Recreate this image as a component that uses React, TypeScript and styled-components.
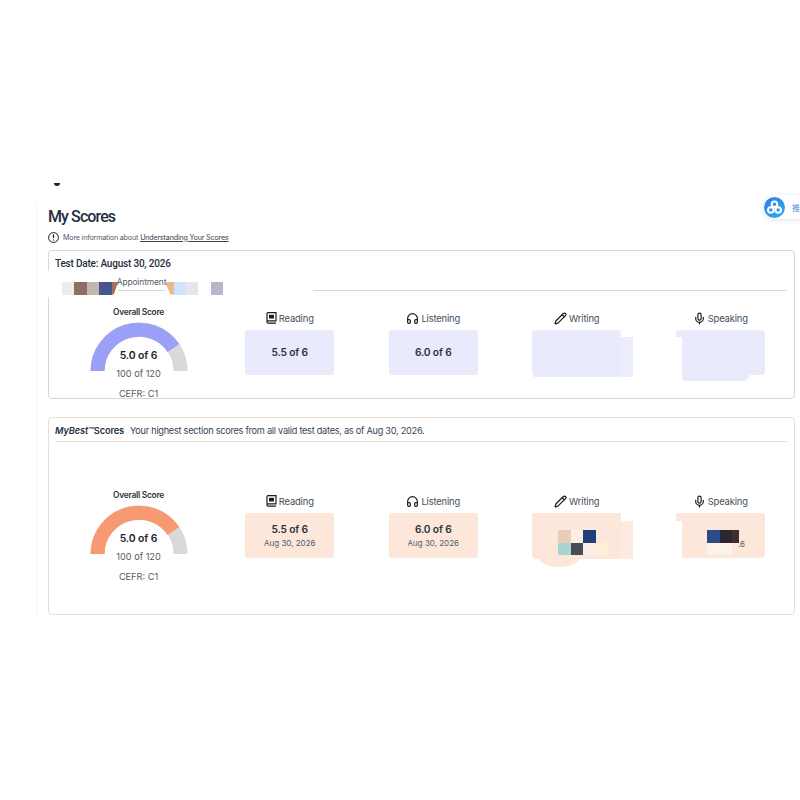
import styled, { createGlobalStyle } from "styled-components";
import { Headphones, Mic, Pencil } from "lucide-react";

const GlobalStyle = createGlobalStyle`
  * { box-sizing: border-box; }
  body {
    margin: 0;
    background: #fff;
    font-family: Inter, "Noto Sans", sans-serif;
    color: #2b3440;
  }
`;

const Page = styled.div`
  position: relative;
  width: 800px;
  height: 800px;
  overflow: hidden;
  padding-top: 183px;
`;
const TopMark = styled.div`
  width: 6px;
  height: 3px;
  margin-left: 54px;
  background: #222;
  border-radius: 0 0 4px 4px;
`;
const Panel = styled.div`
  margin: 16px 0 0 36px;
  padding: 0 5px 3px 11px;
  border-left: 1px solid #f4f4f4;
`;
const Title = styled.h1`
  margin: 0;
  padding-top: 3px;
  font-family: Roboto, sans-serif;
  font-size: 16px;
  line-height: 24px;
  font-weight: 500;
  letter-spacing: -0.9px;
  color: #1f2d3d;
`;
const Info = styled.div`
  display: flex;
  align-items: center;
  gap: 4px;
  height: 14px;
  margin: 1px 0 6px;
  font-size: 7.2px;
  letter-spacing: -0.2px;
  color: #555c66;
  svg { flex: none; }
  u { color: #3a424e; margin-left: 2px; }
`;
const Card = styled.section<{ $border: string; $height: number }>`
  position: relative;
  height: ${(p) => p.$height}px;
  margin-bottom: 18px;
  border: 1px solid ${(p) => p.$border};
  border-radius: 4px;
  &:last-child { margin-bottom: 0; }
`;
const TestDate = styled.h2`
  margin: 6px 0 0 6px;
  font-family: Roboto, sans-serif;
  font-size: 10px;
  line-height: 14px;
  font-weight: 500;
  letter-spacing: -0.2px;
  color: #27303c;
`;
const TabRow = styled.div`
  height: 20px;
  margin: 0 7px 0 6px;
  border-bottom: 1px solid #d6d7dc;
`;
const Tab = styled.div`
  position: relative;
  z-index: 2;
  width: 47px;
  height: 20px;
  margin-left: 63px;
  display: flex;
  justify-content: center;
  padding-top: 6px;
  white-space: nowrap;
  font-size: 8.4px;
  line-height: 11px;
  letter-spacing: -0.1px;
  color: #555c66;
  border-bottom: 1px solid #d6d7dc;
`;
const BestHeader = styled.div`
  display: flex;
  align-items: center;
  height: 23px;
  margin: 1px 7px 0 6px;
  padding-top: 1px;
  border-bottom: 1px solid #f1dccb;
  font-size: 9.2px;
  letter-spacing: -0.27px;
  color: #3c4450;
  b { font-weight: 600; color: #27303c; margin-right: 6px; letter-spacing: -0.1px; }
  i { font-weight: 600; }
`;
const ScoreGrid = styled.div<{ $top: number }>`
  display: grid;
  grid-template-columns: 159px repeat(4, 143.5px);
  margin-left: 10px;
  padding-top: ${(p) => p.$top}px;
`;
const OverallCol = styled.div`
  display: flex;
  flex-direction: column;
  align-items: center;
`;
const OverallLabel = styled.div`
  font-size: 8.4px;
  line-height: 12px;
  font-weight: 600;
  letter-spacing: -0.25px;
  color: #2b3440;
`;
const Gauge = styled.div`
  position: relative;
  width: 98px;
  height: 49px;
  margin-top: 4px;
  svg { display: block; }
`;
const GaugeValue = styled.div`
  position: absolute;
  left: 0;
  right: 0;
  top: 27px;
  text-align: center;
  font-size: 10.4px;
  line-height: 14px;
  font-weight: 600;
  letter-spacing: -0.1px;
  color: #1c2430;
`;
const Sub = styled.div`
  margin-top: -3px;
  font-size: 9.2px;
  line-height: 12px;
  color: #555c66;
`;
const Cefr = styled.div`
  margin-top: 8px;
  font-size: 9.2px;
  line-height: 12px;
  color: #555c66;
`;
const SectionCol = styled.div`
  display: flex;
  flex-direction: column;
  align-items: center;
  margin-top: 5px;
`;
const SectionLabel = styled.div`
  display: flex;
  align-items: center;
  gap: 2px;
  height: 14px;
  font-size: 9.4px;
  letter-spacing: -0.15px;
  color: #444c58;
  svg { color: #1c1c1c; flex: none; }
`;
const ScoreBox = styled.div<{ $bg: string }>`
  width: 89px;
  height: 45px;
  margin-top: 5px;
  display: flex;
  flex-direction: column;
  align-items: center;
  justify-content: center;
  border-radius: 3px;
  background: ${(p) => p.$bg};
`;
const BoxValue = styled.div`
  font-size: 10.2px;
  line-height: 15px;
  font-weight: 600;
  letter-spacing: -0.15px;
  color: #2b3440;
`;
const BoxDate = styled.div`
  font-size: 8px;
  line-height: 12px;
  color: #555c66;
`;
const Smear = styled.div<{ $x: number; $y: number; $w: number; $h: number; $c: string; $r?: string }>`
  position: absolute;
  left: ${(p) => p.$x}px;
  top: ${(p) => p.$y}px;
  width: ${(p) => p.$w}px;
  height: ${(p) => p.$h}px;
  background: ${(p) => p.$c};
  border-radius: ${(p) => p.$r ?? "0"};
`;
const Mosaic = styled.div<{ $x: number; $y: number }>`
  position: absolute;
  left: ${(p) => p.$x}px;
  top: ${(p) => p.$y}px;
  display: flex;
`;
const Tile = styled.div<{ $w: number; $c: string; $clip?: string }>`
  width: ${(p) => p.$w}px;
  height: 12.5px;
  background: ${(p) => p.$c};
  clip-path: ${(p) => p.$clip ?? "none"};
`;
const CutOff = styled.div`
  position: absolute;
  left: 689px;
  top: 120px;
  font-size: 8px;
  line-height: 12px;
  color: #555c66;
`;
const Widget = styled.div`
  position: absolute;
  top: 195px;
  left: 764px;
  width: 60px;
  height: 24px;
  display: flex;
  align-items: center;
  gap: 7px;
  background: #fff;
  border-radius: 12px 0 0 12px;
  box-shadow: 0 1px 6px rgba(120, 140, 170, 0.22);
  font-family: "Noto Sans CJK SC", sans-serif;
  font-size: 8px;
  color: #3f86d8;
  svg { flex: none; }
`;

type Section = { name: string; icon: React.ReactNode; value?: string; date?: string };

const BookIcon = () => (
  <svg width="11" height="12" viewBox="0 0 11 12" fill="none" stroke="#1c1c1c" strokeWidth="1.2">
    <path d="M1 10V1.600C1 1.100 1.400.7 1.900.7H10v8.200H2.100C1.500 8.900 1 9.400 1 10c0 .6.5 1.200 1.100 1.200H10" />
    <path d="M3 2.800h5v3.700H3z" fill="#1c1c1c" stroke="none" />
  </svg>
);

const ScoreGauge = ({ color }: { color: string }) => (
  <svg width="98" height="49" viewBox="0 0 98 49">
    <path d="M7.500 49A41.500 41.500 0 0 1 90.500 49" fill="none" stroke="#d9d9d9" strokeWidth="14" />
    <path d="M7.500 49A41.500 41.500 0 0 1 83.400 26" fill="none" stroke={color} strokeWidth="14" />
  </svg>
);

const BaiduIcon = () => (
  <svg width="21" height="21" viewBox="0 0 21 21">
    <defs>
      <linearGradient id="netdisk" x1="0" y1="0" x2="1" y2="1">
        <stop offset="0" stopColor="#2f7fe6" />
        <stop offset="1" stopColor="#35a9ef" />
      </linearGradient>
    </defs>
    <circle cx="10.500" cy="10.500" r="10.500" fill="url(#netdisk)" />
    <g fill="none" stroke="#fff" strokeWidth="2">
      <circle cx="10.500" cy="7.300" r="2.800" />
      <circle cx="6.800" cy="13" r="2.800" />
      <circle cx="14.200" cy="13" r="2.800" />
    </g>
  </svg>
);

const Overall = ({ color }: { color: string }) => (
  <OverallCol>
    <OverallLabel>Overall Score</OverallLabel>
    <Gauge>
      <ScoreGauge color={color} />
      <GaugeValue>5.0 of 6</GaugeValue>
    </Gauge>
    <Sub>100 of 120</Sub>
    <Cefr>CEFR: C1</Cefr>
  </OverallCol>
);

const sections = (withDate: boolean): Section[] => [
  { name: "Reading", icon: <BookIcon />, value: "5.5 of 6", date: withDate ? "Aug 30, 2026" : undefined },
  { name: "Listening", icon: <Headphones size={13} strokeWidth={2.2} />, value: "6.0 of 6", date: withDate ? "Aug 30, 2026" : undefined },
  { name: "Writing", icon: <Pencil size={13} strokeWidth={2.2} /> },
  { name: "Speaking", icon: <Mic size={13} strokeWidth={2.2} /> },
];

const Sections = ({ bg, withDate }: { bg: string; withDate: boolean }) => (
  <>
    {sections(withDate).map((s) => (
      <SectionCol key={s.name}>
        <SectionLabel>
          {s.icon}
          {s.name}
        </SectionLabel>
        <ScoreBox $bg={bg}>
          {s.value && <BoxValue>{s.value}</BoxValue>}
          {s.date && <BoxDate>{s.date}</BoxDate>}
        </ScoreBox>
      </SectionCol>
    ))}
  </>
);

const App = () => {
  return (
    <Page>
      <GlobalStyle />
      <TopMark />
      <Panel>
        <Title>My Scores</Title>
        <Info>
          <svg width="11" height="11" viewBox="0 0 11 11" fill="none" stroke="#1c1c1c" strokeWidth="1">
            <circle cx="5.500" cy="5.500" r="4.900" />
            <path d="M5.500 2.600v3.400M5.500 7.400v1" strokeWidth="1.200" />
          </svg>
          <span>
            More information about<u>Understanding Your Scores</u>
          </span>
        </Info>

        <Card $border="#d6d7dc" $height={149}>
          <TestDate>Test Date: August 30, 2026</TestDate>
          <TabRow>
            <Tab>Appointment</Tab>
          </TabRow>
          <Smear $x={-2} $y={20} $w={266} $h={26} $c="#fff" />
          <Mosaic $x={13} $y={31}>
            <Tile $w={12} $c="#ececec" />
            <Tile $w={13} $c="#8d6e66" />
            <Tile $w={12} $c="#c4b8ae" />
            <Tile $w={13} $c="#47558f" />
            <Tile $w={6} $c="#a2705c" $clip="polygon(0 0, 100% 0, 30% 100%, 0 100%)" />
            <Tile $w={47} $c="transparent" />
            <Tile $w={9} $c="#eab98c" $clip="polygon(0 0, 100% 0, 100% 100%, 60% 100%)" />
            <Tile $w={12} $c="#cfe4f8" />
            <Tile $w={12} $c="#e6e6f2" />
            <Tile $w={13} $c="transparent" />
            <Tile $w={12} $c="#b8b6cc" />
          </Mosaic>
          <ScoreGrid $top={15}>
            <Overall color="#9aa0f5" />
            <Sections bg="#e9eafb" withDate={false} />
          </ScoreGrid>
          <Smear $x={484} $y={79} $w={88} $h={47} $c="#e9eafb" $r="2px" />
          <Smear $x={572} $y={86} $w={12} $h={40} $c="#ecedfb" />
          <Smear $x={625} $y={86} $w={8} $h={42} $c="#fff" />
          <Smear $x={633} $y={90} $w={68} $h={40} $c="#e9eafb" $r="0 0 8px 4px" />
        </Card>

        <Card $border="#eadfcf" $height={198}>
          <BestHeader>
            <b>
              <i>MyBest™</i>Scores
            </b>
            Your highest section scores from all valid test dates, as of Aug 30, 2026.
          </BestHeader>
          <ScoreGrid $top={47}>
            <Overall color="#f79a72" />
            <Sections bg="#fde6da" withDate />
          </ScoreGrid>
          <Smear $x={484} $y={95} $w={88} $h={46} $c="#fde6da" $r="2px" />
          <Smear $x={572} $y={103} $w={12} $h={38} $c="#fdeae0" />
          <Smear $x={490} $y={130} $w={40} $h={19} $c="#fde6da" $r="0 0 50% 50%" />
          <Mosaic $x={509} $y={112}>
            <Tile $w={13} $c="#e8cdb8" />
            <Tile $w={12} $c="#fdeee4" />
            <Tile $w={13} $c="#1f3f7c" />
          </Mosaic>
          <Mosaic $x={509} $y={124.5}>
            <Tile $w={13} $c="#a9d4d4" />
            <Tile $w={12} $c="#4a4a52" />
            <Tile $w={13} $c="#fbeee9" />
            <Tile $w={12} $c="#fdf0d8" />
          </Mosaic>
          <Smear $x={625} $y={103} $w={8} $h={38} $c="#fff" />
          <Mosaic $x={658} $y={112}>
            <Tile $w={13} $c="#2d4a85" />
            <Tile $w={12} $c="#2c2630" />
            <Tile $w={7} $c="#3d2f2c" />
          </Mosaic>
          <Mosaic $x={658} $y={124.5}>
            <Tile $w={25} $c="#fdf2e8" />
          </Mosaic>
          <CutOff>.6</CutOff>
        </Card>
      </Panel>
      <Widget>
        <BaiduIcon />推
      </Widget>
    </Page>
  );
};

export default App;
